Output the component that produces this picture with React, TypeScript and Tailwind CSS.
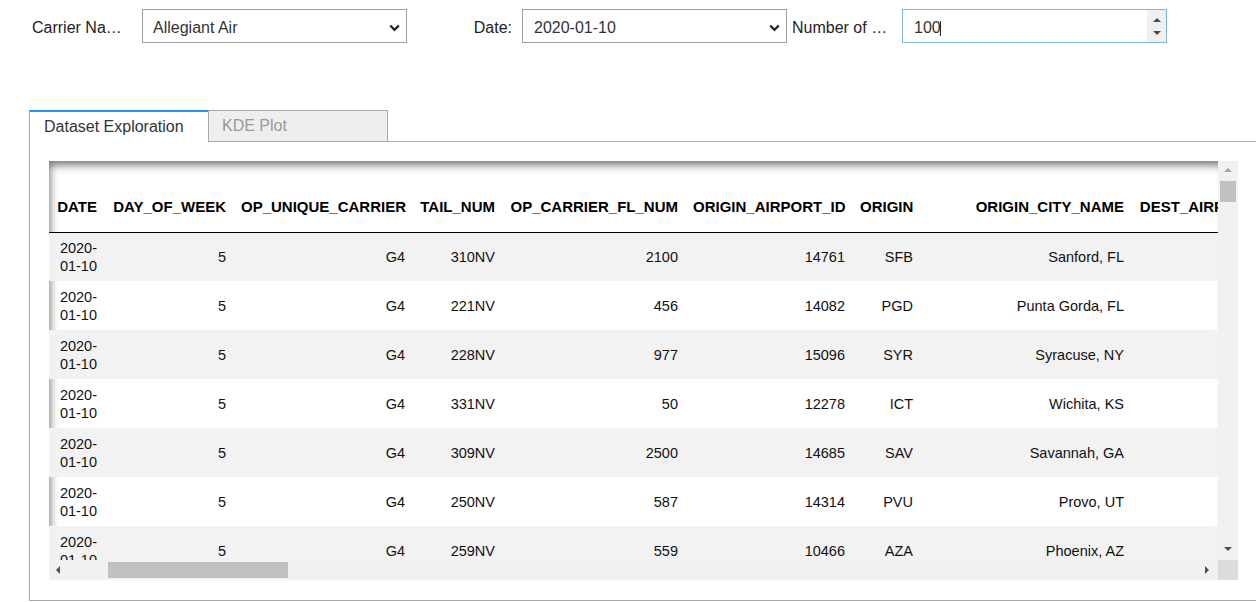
import React from "react";

const columns = [
  { name: "DATE", width: 56 },
  { name: "DAY_OF_WEEK", width: 129 },
  { name: "OP_UNIQUE_CARRIER", width: 179 },
  { name: "TAIL_NUM", width: 90 },
  { name: "OP_CARRIER_FL_NUM", width: 183 },
  { name: "ORIGIN_AIRPORT_ID", width: 167 },
  { name: "ORIGIN", width: 68 },
  { name: "ORIGIN_CITY_NAME", width: 211 },
  { name: "DEST_AIRPORT_ID", width: 155 },
  { name: "DEST", width: 60 },
  { name: "DEST_CITY_NAME", width: 220 },
];

const rows = [
  ["G4", "310NV", "2100", "14761", "SFB", "Sanford, FL", "11066", "CMH", "Columbus, OH"],
  ["G4", "221NV", "456", "14082", "PGD", "Punta Gorda, FL", "10466", "AVL", "Asheville, NC"],
  ["G4", "228NV", "977", "15096", "SYR", "Syracuse, NY", "14112", "PIE", "St. Petersburg, FL"],
  ["G4", "331NV", "50", "12278", "ICT", "Wichita, KS", "12889", "LAS", "Las Vegas, NV"],
  ["G4", "309NV", "2500", "14685", "SAV", "Savannah, GA", "11042", "CLE", "Cleveland, OH"],
  ["G4", "250NV", "587", "14314", "PVU", "Provo, UT", "14747", "SEA", "Seattle, WA"],
  ["G4", "259NV", "559", "10466", "AZA", "Phoenix, AZ", "13485", "MSN", "Madison, WI"],
  ["G4", "264NV", "1300", "12889", "LAS", "Las Vegas, NV", "11697", "FLL", "Fort Lauderdale, FL"],
];

const Chevron = () => (
  <svg width="11" height="8" viewBox="0 0 11 8">
    <path d="M1.2 1.5 L5.5 5.8 L9.8 1.5" fill="none" stroke="#222" strokeWidth="2.3" />
  </svg>
);

const Tri = ({ dir, color }: { dir: "up" | "down" | "left" | "right"; color: string }) => {
  const d = {
    up: "M0 4 L4 0 L8 4 Z",
    down: "M0 0 L8 0 L4 4 Z",
    left: "M4 0 L4 8 L0 4 Z",
    right: "M0 0 L0 8 L4 4 Z",
  }[dir];
  const vertical = dir === "up" || dir === "down";
  return (
    <svg width={vertical ? 8 : 4} height={vertical ? 4 : 8} viewBox={vertical ? "0 0 8 4" : "0 0 4 8"}>
      <path d={d} fill={color} />
    </svg>
  );
};

export default function App() {
  return (
    <div className="w-[1256px] h-[602px] overflow-hidden bg-white font-['Liberation_Sans',Arial,sans-serif] text-[16px]">
      {/* Controls */}
      <div className="flex items-center pt-[9px] pl-[32px]">
        <div className="flex items-center">
          <div className="w-[90px] mr-[20px] pt-[4px] truncate text-right text-[#222]">Carrier Name</div>
          <div className="w-[265px] h-[34px] border border-[#a0a0a0] flex items-center justify-between pt-[4px] pl-[10px] pr-[6px] text-[#333]">
            <span>Allegiant Air</span>
            <Chevron />
          </div>
        </div>
        <div className="flex items-center ml-[5px]">
          <div className="w-[100px] mr-[10px] pt-[4px] truncate text-right text-[#222]">Date:</div>
          <div className="w-[265px] h-[34px] border border-[#a0a0a0] flex items-center justify-between pt-[4px] pl-[11px] pr-[6px] text-[#333]">
            <span>2020-01-10</span>
            <Chevron />
          </div>
        </div>
        <div className="flex items-center ml-[5px]">
          <div className="w-[100px] mr-[10px] pt-[4px] truncate text-left text-[#222]">Number of rows</div>
          <div className="w-[265px] h-[34px] border border-[#80b4dc] flex items-center justify-between pl-[11px] pr-0 text-[#333]">
            <span className="flex items-center pt-[4px]">
              100
              <span className="inline-block w-px h-[15px] bg-[#222] ml-[-1px]" />
            </span>
            <div className="w-[19px] h-[32px] bg-[#f0f0f0] flex flex-col items-center justify-center gap-[9px]">
              <Tri dir="up" color="#4a4a4a" />
              <Tri dir="down" color="#4a4a4a" />
            </div>
          </div>
        </div>
      </div>

      {/* Tabs */}
      <div className="mt-[67px] ml-[29px]">
        <div className="flex h-[32px]">
          <div className="w-[179px] h-[32px] border-t-2 border-t-[#2196f3] border-l border-l-[#a9a9a9] bg-white flex items-center pl-[14px] text-[#333]">
            Dataset Exploration
          </div>
          <div className="w-[180px] h-[32px] border border-[#a9a9a9] bg-[#eeeeee] flex items-center pl-[13px] pb-[1px] text-[#999]">
            KDE Plot
          </div>
          <div className="flex-1 border-b border-[#a9a9a9]" />
        </div>

        <div className="border-l border-b border-[#a9a9a9] pt-[19px] pl-[19px] pb-[20px]">
          <div className="grid grid-cols-[1169px_20px] grid-rows-[399px_20px] w-[1189px]">
            {/* Table viewport */}
            <div className="overflow-hidden shadow-[inset_4px_7px_8px_-3px_rgba(0,0,0,0.55)]">
              <table className="table-fixed border-collapse w-[1518px] text-[14.5px] leading-[18px] text-[#111]">
                <colgroup>
                  {columns.map((c) => (
                    <col key={c.name} style={{ width: c.width }} />
                  ))}
                </colgroup>
                <thead>
                  <tr className="h-[71px] border-b border-black">
                    {columns.map((c) => (
                      <th
                        key={c.name}
                        className="align-bottom text-right text-[15px] font-bold whitespace-nowrap pl-[7px] pr-[8px] pb-[16px] text-black"
                      >
                        {c.name}
                      </th>
                    ))}
                  </tr>
                </thead>
                <tbody>
                  {rows.map((r, i) => (
                    <tr key={i} className={`h-[49px] ${i % 2 === 0 ? "bg-[#f2f2f2]" : ""}`}>
                      <td className="align-middle text-right pl-[7px] pr-[8px] pt-[1px]">
                        2020-<wbr />01-10
                      </td>
                      <td className="align-middle text-right pl-[7px] pr-[8px] pt-[1px]">5</td>
                      {r.map((v, j) => (
                        <td key={j} className="align-middle text-right whitespace-nowrap pl-[7px] pr-[8px] pt-[1px]">
                          {v}
                        </td>
                      ))}
                    </tr>
                  ))}
                </tbody>
              </table>
            </div>

            {/* Vertical scrollbar */}
            <div className="bg-[#f1f1f1] flex flex-col">
              <div className="h-[20px] flex items-center justify-center pb-[2px]">
                <Tri dir="up" color="#a3a3a3" />
              </div>
              <div className="h-[21px] mx-[2px] bg-[#c1c1c1]" />
              <div className="flex-1" />
              <div className="h-[20px] flex items-center justify-center pb-[3px]">
                <Tri dir="down" color="#505050" />
              </div>
            </div>

            {/* Horizontal scrollbar */}
            <div className="bg-[#f1f1f1] flex items-center">
              <div className="w-[20px] h-[20px] flex items-center justify-center pr-[2px]">
                <Tri dir="left" color="#505050" />
              </div>
              <div className="w-[180px] h-[16px] ml-[39px] bg-[#c1c1c1]" />
              <div className="flex-1" />
              <div className="w-[20px] h-[20px] flex items-center justify-center pr-[3px]">
                <Tri dir="right" color="#505050" />
              </div>
            </div>
            <div className="bg-[#dcdcdc]" />
          </div>
        </div>
      </div>
    </div>
  );
}
